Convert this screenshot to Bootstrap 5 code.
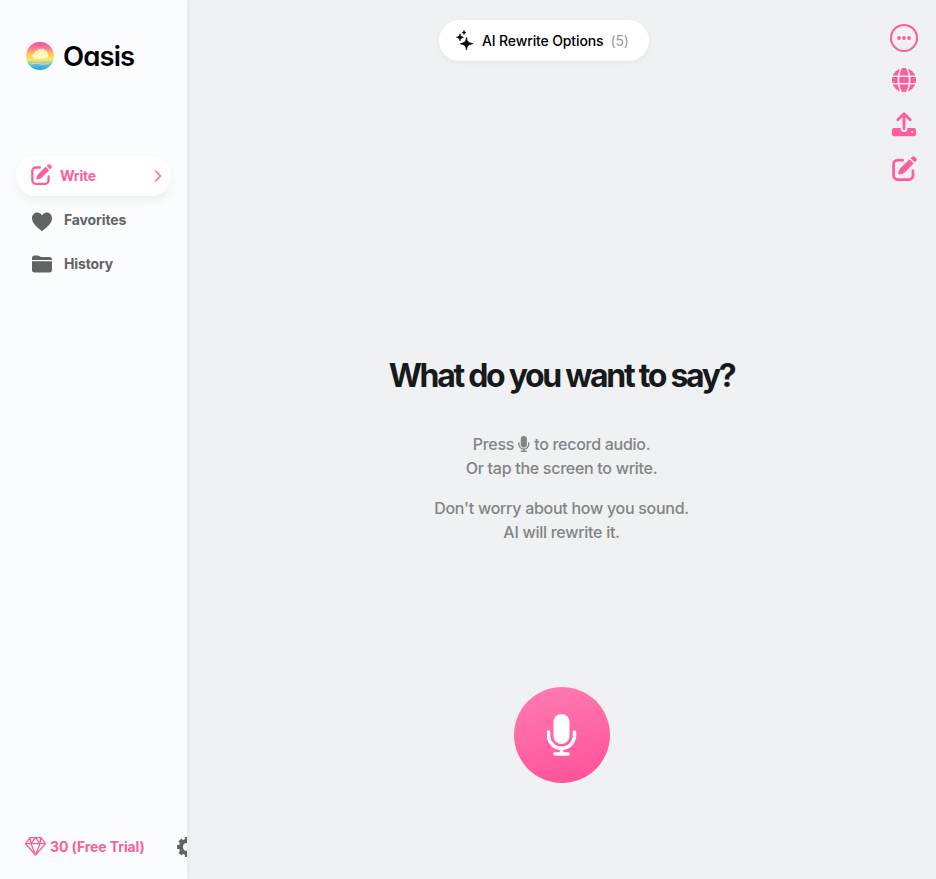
<!DOCTYPE html>
<html lang="en">
<head>
<meta charset="utf-8">
<meta name="viewport" content="width=device-width, initial-scale=1">
<title>Oasis</title>
<link href="https://cdn.jsdelivr.net/npm/bootstrap@5.3.0/dist/css/bootstrap.min.css" rel="stylesheet">
<style>
body{font-family:Inter,"Liberation Sans",sans-serif;background:#eff1f3;color:#18191b}
svg{display:block;flex:none}
.pink{color:#ff5c9d}
.sidebar{width:187px;background:#fafcfe;box-shadow:1px 0 5px rgba(0,0,0,.06)}
.brand{padding:42px 0 0 26px;height:156px;gap:9px}
.brand-name{font-family:Inter,sans-serif;font-size:27.5px;font-weight:600;line-height:28px;letter-spacing:-.9px;color:#000;font-feature-settings:"cv11","ss03"}
.menu{padding:0 16px}
.menu-item{height:40px;margin-bottom:4px;padding:0 9px 0 15px;font-size:14px;font-weight:700;color:#626365;text-decoration:none;border-radius:20px;letter-spacing:-.13px}
.menu-item.current{background:#fff;color:#f9609d;box-shadow:0 5px 10px rgba(0,0,0,.055);letter-spacing:-.2px}
.menu-item span{padding-bottom:2px}
.menu-label{margin-left:11px}
.account{height:64px;padding-left:24px;font-size:14px;font-weight:700;color:#f9609d;letter-spacing:-.1px}
.account-label{margin-left:3px;padding-bottom:2px}
.gear{margin-left:31px}
.options{height:41px;width:210px;margin:20px 35px 0 0;padding-left:17px;font-size:14px;font-weight:500;letter-spacing:-.13px;color:#000;background:#fff;border:0;box-shadow:0 1px 5px rgba(0,0,0,.05)}
.options .count{color:#999;font-weight:400;margin-left:7px}
.tools{top:24px;right:18px;width:28px}
.tool-upload{margin-top:20px}
.tool-edit{margin-top:19px}
.headline{font-size:32px;line-height:40px;font-weight:700;letter-spacing:-2.3px;margin:295px 0 36px}
.hint{font-size:16px;line-height:24px;font-weight:500;letter-spacing:-.28px;color:#838486}
.hint svg{display:inline-block;vertical-align:-2px}
.record{width:96px;height:96px;margin-top:127px;background:linear-gradient(165deg,#ff7db2,#ff4f97);border:0;color:#fff}
</style>
<script src="https://cdn.jsdelivr.net/npm/bootstrap@5.3.0/dist/js/bootstrap.bundle.min.js"></script>
</head>
<body>
<svg width="0" height="0" class="position-absolute" aria-hidden="true">
<defs>
<symbol id="edit" viewBox="0 0 24 24"><path d="M10.200 4H5.300A3.800 3.800 0 0 0 1.500 7.800V18.800a3.800 3.800 0 0 0 3.800 3.800h11a3.800 3.800 0 0 0 3.800-3.800v-4.600" fill="none" stroke="currentColor" stroke-width="2.600" stroke-linecap="round"/><path d="m16.800 3.200 4 4-8.600 8.600c-.5.500-1 .8-1.700 1l-3.500 1c-.6.200-1.100-.3-1-.9l1-3.600c.2-.6.500-1.100 1-1.600zM17.900 2.100l1-1a2.400 2.400 0 0 1 3.400 0l.6.600a2.400 2.400 0 0 1 0 3.400l-1 1z" fill="currentColor"/></symbol>
<symbol id="mic" viewBox="0 0 30 42"><rect x="6.500" width="16" height="30" rx="8" fill="currentColor"/><path d="M1.500 18v3.300a13 13 0 0 0 26 0V18M14.500 34v5M8 40h13" fill="none" stroke="currentColor" stroke-width="3.600" stroke-linecap="round"/></symbol>
</defs>
</svg>
<div class="d-flex vh-100 overflow-hidden">
<aside class="sidebar d-flex flex-column flex-shrink-0 overflow-hidden">
  <div class="brand d-flex">
    <svg width="28" height="28" viewBox="0 0 28 28"><defs><linearGradient id="sky" x2="0" y2="1"><stop stop-color="#ee4ca9"/><stop offset=".22" stop-color="#fb7b91"/><stop offset=".42" stop-color="#ffc653"/><stop offset=".64" stop-color="#fbe66a"/><stop offset=".78" stop-color="#65c9d0"/><stop offset="1" stop-color="#249be8"/></linearGradient></defs><circle cx="14" cy="14" r="14" fill="url(#sky)"/><path d="m7 15.500-1-2 1-1.500 2-.7.400-2.300 2.300-.4 1.300-1.600 2.300.3 1.800-.8 1.700 2 2 .3.500 2 1.200 1.500-.7 2 .7 1.500-3 .5-3 1-4-.6-3 .5z" fill="#fff8bc"/><path d="M2 18.500h7l3 1 5-1h8M4 22l7-.8 5 1 7-.5" fill="none" stroke="#f8df6f" stroke-width=".9"/></svg>
    <span class="brand-name">Oasis</span>
  </div>
  <nav class="menu flex-grow-1">
    <a href="#" class="menu-item current d-flex align-items-center"><svg width="21" height="21" class="mb-1"><use href="#edit"/></svg><span class="ms-2 flex-grow-1">Write</span><svg width="8" height="12" viewBox="0 0 8 12" fill="none" stroke="currentColor" stroke-width="1.400" stroke-linecap="round" stroke-linejoin="round"><path d="m1.500 1 5 5-5 5"/></svg></a>
    <a href="#" class="menu-item d-flex align-items-center"><svg width="22" height="20" viewBox="0 0 22 20" class="mt-1"><path fill="currentColor" d="M11 19.200C7.500 16.200 1 12 1 6.300 1 3 3.200.5 6 .5c2.200 0 4 1.200 5 3.100 1-1.900 2.800-3.100 5-3.100 2.800 0 5 2.500 5 5.800 0 5.700-6.500 9.900-10 12.900z"/></svg><span class="menu-label">Favorites</span></a>
    <a href="#" class="menu-item d-flex align-items-center"><svg width="22" height="18" viewBox="0 0 22 18" fill="currentColor"><path d="M1 5V3a2.500 2.500 0 0 1 2.500-2.500h3.200c.8 0 1.300.2 1.900.7l.5.400c.5.400.9.500 1.500.5h7.700A2.700 2.700 0 0 1 21 4.800V5zM1 6.200h20v8.600a2.700 2.700 0 0 1-2.700 2.700H3.700A2.700 2.700 0 0 1 1 14.800z"/></svg><span class="menu-label">History</span></a>
  </nav>
  <div class="account d-flex align-items-center text-nowrap">
    <svg width="23" height="20" viewBox="0 1 23 20" fill="none" stroke="currentColor" stroke-width="1.300" stroke-linejoin="round"><path d="M6 1.700h11l4.500 6-10 11.300L1.500 7.700zM1.500 7.700h20M6 1.700l1 6L11.500 19 16 7.700l1-6M7 7.700l4.500-6 4.500 6"/></svg>
    <span class="account-label">30 (Free Trial)</span>
    <svg class="gear" width="22" height="22" viewBox="0 0 22 22"><circle cx="11" cy="11" r="6" fill="none" stroke="#626365" stroke-width="4"/><path stroke="#626365" stroke-width="4.200" d="M11 1v4M11 17v4M1 11h4M17 11h4M3.900 3.900l3 3M3.900 18.100l3-3M18.100 3.900l-3 3M18.100 18.100l-3-3"/></svg>
  </div>
</aside>
<main class="flex-grow-1 position-relative d-flex flex-column align-items-center">
  <button class="options rounded-pill d-flex align-items-center text-nowrap"><svg width="18" height="22" viewBox="0 0 18 22" fill="currentColor" class="me-2"><path d="M10.500 7.500c.8 4.500 1.500 5 6.300 6.200-4.800 1.200-5.500 1.800-6.300 6.300-.8-4.500-1.500-5.100-6.300-6.300C9 12.500 9.700 12 10.500 7.500zM4 3.800c.5 2.400 1 2.900 3.400 3.500C5 7.900 4.500 8.400 4 10.800 3.500 8.400 3 7.900.6 7.300 3 6.700 3.500 6.200 4 3.800zM8 .5c.3 1.400.6 1.700 2 2-1.400.3-1.700.6-2 2-.3-1.400-.6-1.700-2-2 1.400-.3 1.700-.6 2-2z" stroke="currentColor" stroke-width=".7"/></svg><span>AI Rewrite Options</span><span class="count">(5)</span></button>
  <div class="tools pink position-absolute d-flex flex-column align-items-center">
    <svg width="28" height="28" viewBox="0 0 28 28"><circle cx="14" cy="14" r="13" fill="none" stroke="currentColor" stroke-width="2"/><g fill="currentColor"><circle cx="9" cy="14" r="1.900"/><circle cx="14" cy="14" r="1.900"/><circle cx="19" cy="14" r="1.900"/></g></svg>
    <svg class="mt-3" width="24" height="24" viewBox="0 0 24 24"><circle cx="12" cy="12" r="12" fill="currentColor"/><path d="M0 8.200h24M0 15.800h24M9.200-.5Q3.500 12 9.200 24.500M14.800-.5q5.700 12.500 0 25" fill="none" stroke="#eff1f3" stroke-width="1.500"/></svg>
    <svg class="tool-upload" width="24" height="25" viewBox="0 0 24 25"><path d="M2 16h6.600v.6a3.400 3.400 0 0 0 6.800 0V16H22a2 2 0 0 1 2 2v4.200a2 2 0 0 1-2 2H2a2 2 0 0 1-2-2V18a2 2 0 0 1 2-2z" fill="currentColor"/><path d="M12 16.600V2M5.800 7.800 12 1.700l6.200 6.100" fill="none" stroke="currentColor" stroke-width="2.800" stroke-linecap="round" stroke-linejoin="round"/><circle cx="20.200" cy="20" r="1.100" fill="#eff1f3"/></svg>
    <svg class="tool-edit" width="25" height="25"><use href="#edit"/></svg>
  </div>
  <h1 class="headline text-nowrap">What do you want to say?</h1>
  <div class="hint text-center">
    <p class="mb-3">Press <svg width="12" height="16"><use href="#mic"/></svg> to record audio.<br>Or tap the screen to write.</p>
    <p class="mb-3">Don't worry about how you sound.<br>AI will rewrite it.</p>
  </div>
  <button class="record rounded-circle d-flex align-items-center justify-content-center flex-shrink-0"><svg width="30" height="42"><use href="#mic"/></svg></button>
</main>
</div>
</body>
</html>
